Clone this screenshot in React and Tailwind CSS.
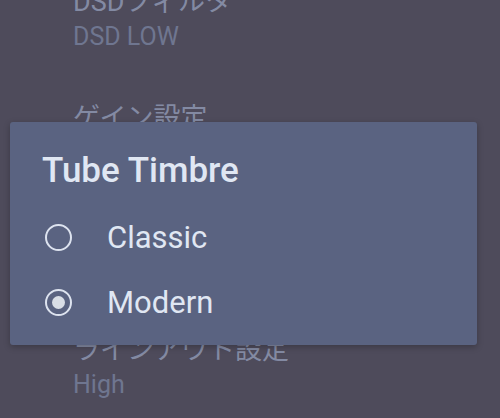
const settings = [
	{ title: "DSDフィルタ", value: "DSD LOW" },
	{ title: "ゲイン設定", value: "Low" },
	{ title: "Tube Timbre", value: "Modern" },
	{ title: "ラインアウト設定", value: "High" },
];

const options = [
	{ label: "Classic", checked: false },
	{ label: "Modern", checked: true },
];

const Radio = ({ checked }) => (
	<span className="flex h-[27px] w-[27px] shrink-0 items-center justify-center rounded-full border-[2.5px] border-[#dde3ef]">
		{checked && <span className="h-[13px] w-[13px] rounded-full bg-[#d9dee6]" />}
	</span>
);

export default function App() {
	return (
		<div
			className="relative h-[418px] w-[500px] overflow-hidden bg-[#4e4b5b]"
			style={{ fontFamily: "Roboto, 'Noto Sans CJK JP', sans-serif" }}
		>
			<div className="-mt-[14px] flex flex-col pl-[73px]">
				{settings.map((item) => (
					<div key={item.title} className="flex h-[116px] flex-col">
						<span className="text-[27px] leading-[32px] text-[#838aa3]">{item.title}</span>
						<span className="mt-[3px] text-[25px] leading-[32px] text-[#6f7690]">{item.value}</span>
					</div>
				))}
			</div>

			<div className="absolute left-[10px] top-[122px] h-[223px] w-[467px] rounded-[3px] bg-[#5a6381] pl-[32px] pt-[29px] text-[#e0e7f3] shadow-[0_2px_6px_rgba(0,0,0,0.25)]">
				<h2 className="text-[35px] font-medium leading-[40px]">Tube Timbre</h2>
				<div className="mt-[14px] flex flex-col">
					{options.map((opt) => (
						<div key={opt.label} className="flex h-[65px] items-center gap-[35px] pl-[3px]">
							<Radio checked={opt.checked} />
							<span className="text-[31px] leading-[65px]">{opt.label}</span>
						</div>
					))}
				</div>
			</div>
		</div>
	);
}
